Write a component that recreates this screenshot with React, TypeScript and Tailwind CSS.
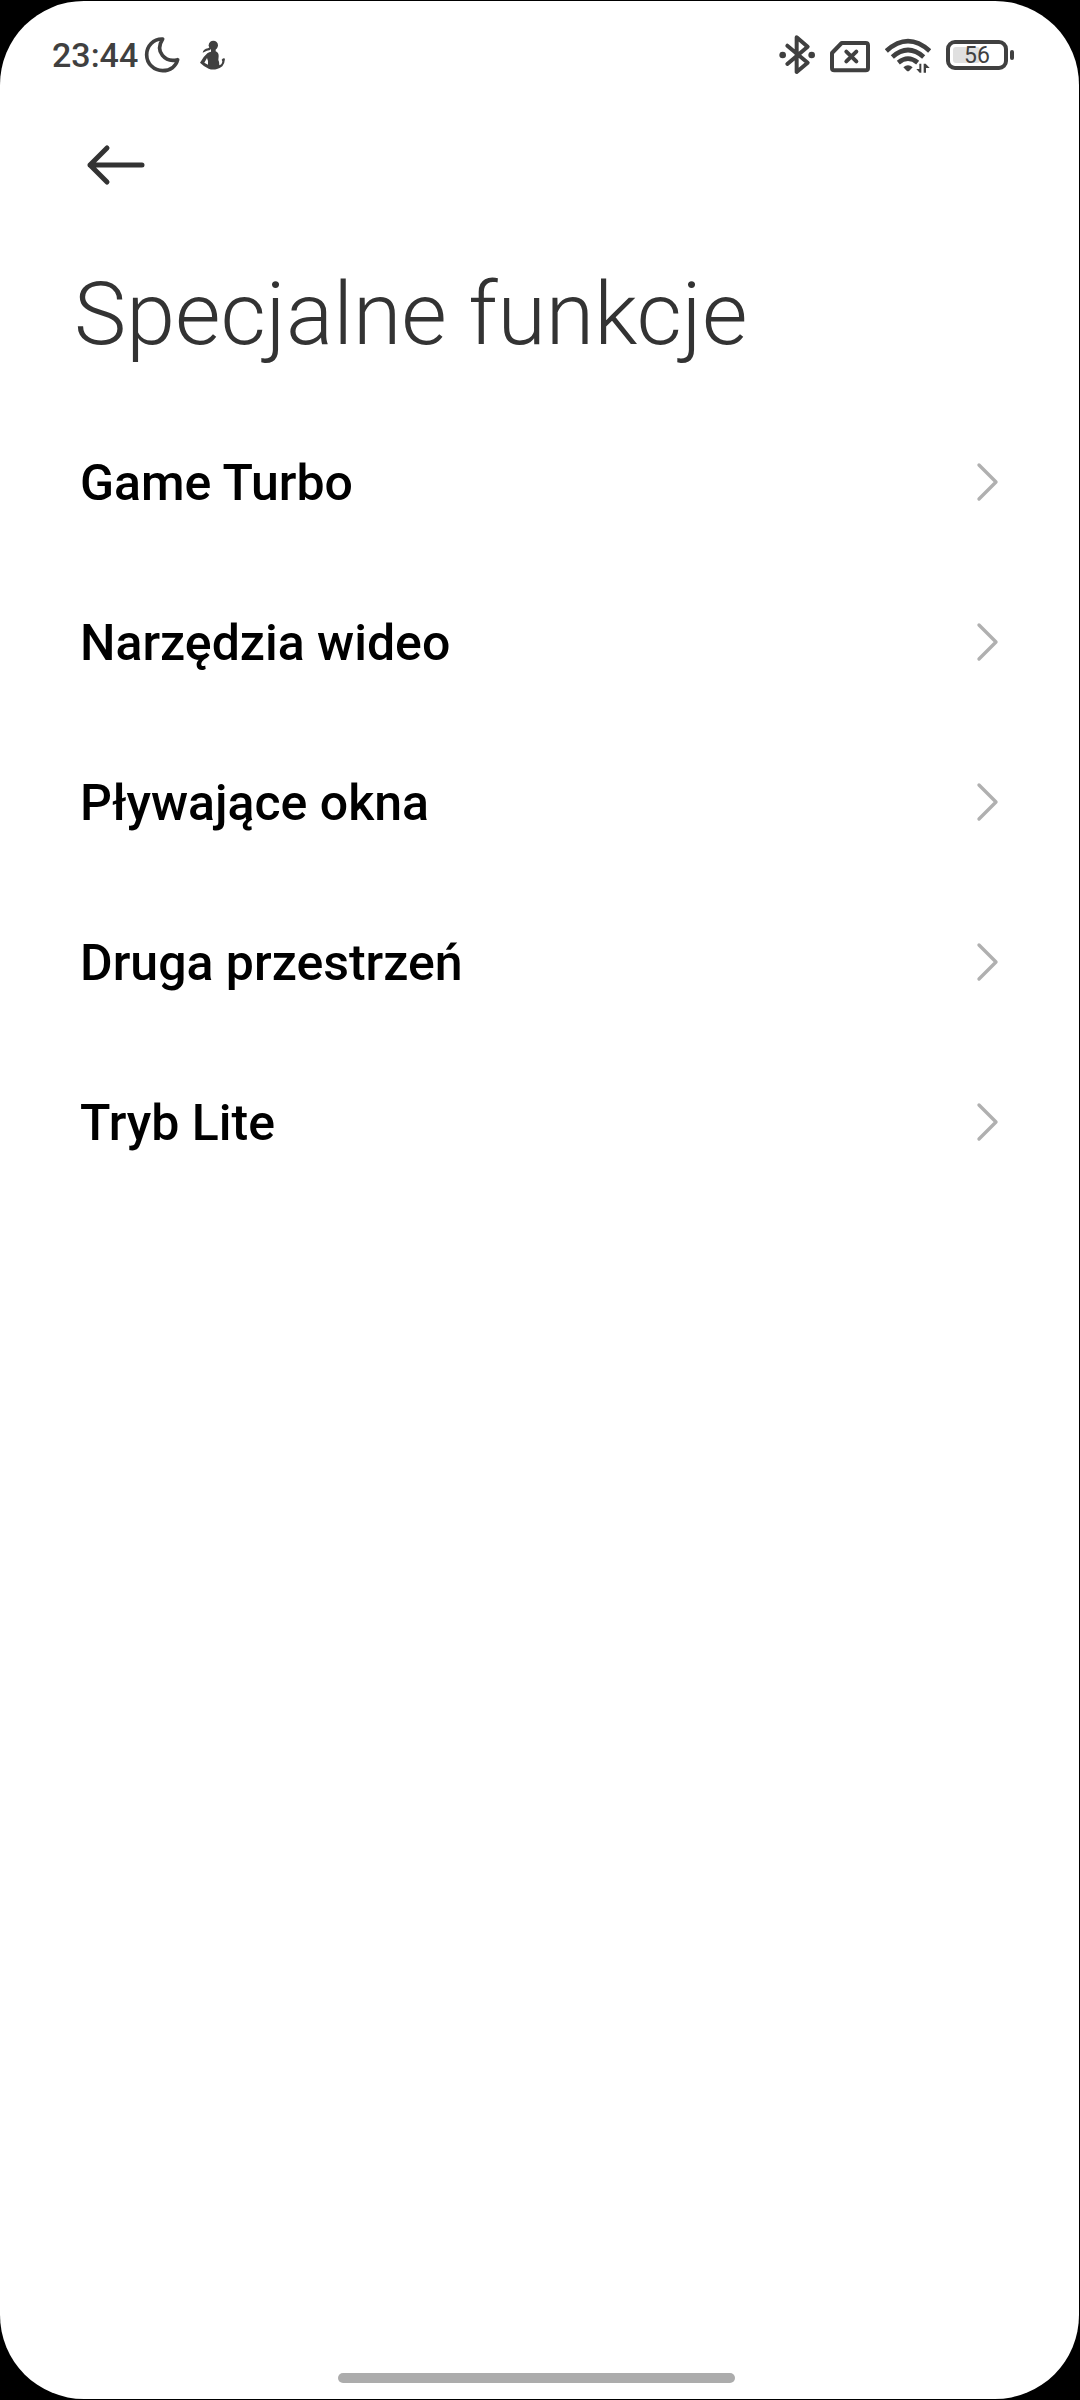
const items = [
  "Game Turbo",
  "Narzędzia wideo",
  "Pływające okna",
  "Druga przestrzeń",
  "Tryb Lite",
]

const battery = 56

function MoonIcon() {
  return (
    <svg className="w-9 h-10" viewBox="12 15 108 120" fill="none" stroke="currentColor" strokeWidth={11} strokeLinejoin="round">
      <path d="M68 27C40 26 20 48 20 74C20 101 42 122 68 122C91 122 108 109 113 89C76 99 43 66 68 27Z" />
    </svg>
  )
}

function FigureIcon() {
  return (
    <svg className="ml-5 w-[25px] h-10" viewBox="180 15 75 120" fill="currentColor">
      <circle cx="220" cy="46" r="14" />
      <path d="M212 50L211 60L201 62L188 68Q190 57 204 55Z" />
      <path fillRule="evenodd" d="M213 56H227V64Q236 67 236 78L235 90Q239 97 238 106Q246 104 247 94L245 89Q251 82 255 86Q254 101 247 109Q239 116 231 117Q218 121 206 116Q192 110 180 98Q190 80 202 70Q208 66 213 65ZM201 84L193 98L204 104Q206 94 201 84Z" />
    </svg>
  )
}

function BluetoothIcon() {
  return (
    <svg className="w-9 h-10" viewBox="11 15 108 120" fill="none" stroke="currentColor" strokeWidth={12} strokeLinejoin="round" strokeLinecap="round">
      <path d="M36 47L97 98L64 126V22L97 50L36 102" />
      <circle cx="22" cy="75" r="10" fill="currentColor" stroke="none" />
      <circle cx="109" cy="75" r="10" fill="currentColor" stroke="none" />
    </svg>
  )
}

function NoSimIcon() {
  return (
    <svg className="w-10 h-10" viewBox="165 15 120 120" fill="none" stroke="currentColor" strokeWidth={12} strokeLinejoin="round" strokeLinecap="round">
      <path d="M200 39H272Q279 39 279 46V114Q279 121 272 121H178Q171 121 171 114V69Z" />
      <path d="M214 65L244 94M244 65L214 94" />
    </svg>
  )
}

function WifiIcon() {
  return (
    <svg className="w-[46px] h-10" viewBox="15 15 138 120" fill="none" stroke="currentColor" strokeWidth={14}>
      <path d="M19 63Q84 4 149 63" />
      <path d="M37 81Q84 39 131 81" />
      <path d="M55 98Q84 74 113 98" />
      <path d="M70 112Q84 100 98 112L88 122Q84 126 80 122Z" fill="currentColor" stroke="none" />
      <path d="M124 101V128H119L109 117H118V101ZM131 128V101H137L149 114H138V128Z" fill="currentColor" stroke="none" />
    </svg>
  )
}

function StatusBar() {
  return (
    <header className="flex items-center justify-between pl-[52px] pr-[65px] pt-[34px] text-[#404040]">
      <div className="flex items-center">
        <span className="mr-[6px] text-[34px] leading-[40px] font-medium">23:44</span>
        <MoonIcon />
        <FigureIcon />
      </div>
      <div className="flex items-center gap-[15px]">
        <BluetoothIcon />
        <NoSimIcon />
        <WifiIcon />
        <div className="flex items-center gap-[2px]">
          <div className="relative h-[30px] w-[62px] rounded-[9px] border-4 border-[#404040] p-[3px]">
            <div className="h-full rounded-[3px] bg-[#e0e0e0]" style={{ width: `${battery}%` }} />
            <span className="absolute inset-0 flex items-center justify-center pt-[2px] text-[23px] leading-[22px]">{battery}</span>
          </div>
          <div className="h-[10px] w-1 rounded-[2px] bg-[#404040]" />
        </div>
      </div>
    </header>
  )
}

export default function App() {
  return (
    <div className="flex min-h-screen bg-black pt-px pr-px pb-px font-[Roboto,sans-serif]">
      <div className="flex w-full flex-col rounded-[84px] bg-white">
        <StatusBar />
        <nav className="pl-[84px] pt-[66px]">
          <button aria-label="Wstecz" className="block">
            <svg className="w-16 h-12" viewBox="0 0 64 48" fill="none" stroke="#333" strokeWidth={5} strokeLinecap="round" strokeLinejoin="round">
              <path d="M23 7L6 24L23 41M6 24H58" />
            </svg>
          </button>
        </nav>
        <h1 className="mt-[73px] pl-[74px] text-[88px] leading-[104px] font-light text-[#333]">Specjalne funkcje</h1>
        <ul className="mt-9">
          {items.map((item) => (
            <li key={item}>
              <a href="#" className="flex h-40 items-center justify-between px-20 text-[50px] font-medium text-black">
                <span className="pt-[2px]">{item}</span>
                <svg className="w-6 h-10" viewBox="0 0 24 40" fill="none" stroke="#b0b0b0" strokeWidth={3.4} strokeLinecap="round" strokeLinejoin="round">
                  <path d="M4 3L21 20L4 37" />
                </svg>
              </a>
            </li>
          ))}
        </ul>
        <div className="mt-auto mb-4 flex justify-center pr-[6px]">
          <div className="h-[10px] w-[37%] rounded-full bg-[#acacac]" />
        </div>
      </div>
    </div>
  )
}
